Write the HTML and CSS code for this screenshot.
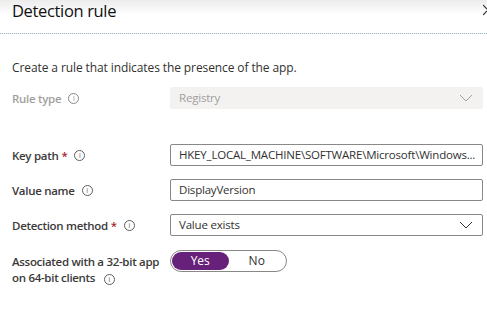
FILE: index.html
```html
<!DOCTYPE html>
<html lang="en">
<head>
  <meta charset="UTF-8" />
  <title>Detection rule</title>
  <link rel="stylesheet" href="styles.css">
</head>
<body>

<div class="panel">
  <div class="panel-header">
    <h2>Detection rule</h2>
    <svg class="close" width="4" height="14" viewBox="0 0 4 14"><path d="M0 2l4 4M0 12l4-4" stroke="#333" stroke-width="1.2"/></svg>
  </div>

  <div class="panel-body">
    <p class="intro">Create a rule that indicates the presence of the app.</p>

    <div class="row disabled">
      <label>Rule type <span class="info">i</span></label>
      <div class="select">
        <span>Registry</span>
        <svg class="chev" width="14" height="8" viewBox="0 0 14 8"><path d="M1 1l6 6 6-6" fill="none" stroke="currentColor" stroke-width="1"/></svg>
      </div>
    </div>

    <div class="row first">
      <label>Key path <span class="req">*</span> <span class="info">i</span></label>
      <div class="input">HKEY_LOCAL_MACHINE\SOFTWARE\Microsoft\Windows...</div>
    </div>

    <div class="row">
      <label>Value name <span class="info">i</span></label>
      <div class="input">DisplayVersion</div>
    </div>

    <div class="row">
      <label>Detection method <span class="req">*</span> <span class="info">i</span></label>
      <div class="select">
        <span>Value exists</span>
        <svg class="chev" width="14" height="8" viewBox="0 0 14 8"><path d="M1 1l6 6 6-6" fill="none" stroke="currentColor" stroke-width="1"/></svg>
      </div>
    </div>

    <div class="row toggle-row">
      <label>Associated with a 32-bit app<br>on 64-bit clients <span class="info">i</span></label>
      <div class="toggle">
        <span class="opt on">Yes</span>
        <span class="opt">No</span>
      </div>
    </div>
  </div>
</div>

</body>
</html>
```

FILE: styles.css
```css
* {
  margin: 0;
  padding: 0;
  box-sizing: border-box;
  font-family: "Open Sans", "Noto Sans", sans-serif;
}

body {
  background: #fff;
  width: 487px;
  height: 313px;
  overflow: hidden;
  color: #323130;
}

.panel-header {
  height: 34px;
  display: flex;
  justify-content: space-between;
  align-items: flex-start;
  padding: 1px 0 0 12px;
  background: linear-gradient(#ececec, #fff 45%);
  border-bottom: 1px dotted #9fb6c6;
}

.panel-header h2 {
  font-size: 16.5px;
  font-weight: 400;
  color: #111;
  line-height: 19px;
  letter-spacing: -0.35px;
}

.close {
  margin-top: 2px;
}

.panel-body {
  padding: 27px 4px 0 12px;
}

.intro {
  font-size: 12px;
  line-height: 14px;
  color: #323130;
  letter-spacing: -0.1px;
}

.row {
  display: flex;
  align-items: center;
  margin-top: 13px;
}

.row label {
  width: 158px;
  flex-shrink: 0;
  font-size: 11.5px;
  font-weight: 600;
  letter-spacing: -0.3px;
  color: #3b3a39;
  display: flex;
  align-items: center;
  white-space: nowrap;
}

.row.disabled {
  margin-top: 12px;
}

.row.disabled label {
  color: #a19f9d;
}

.row.first {
  margin-top: 35px;
}

.req {
  color: #a4262c;
  margin-left: 3px;
}

.info {
  display: inline-flex;
  justify-content: center;
  align-items: center;
  width: 11px;
  height: 11px;
  border: 1px solid #605e5c;
  border-radius: 50%;
  font-size: 7px;
  font-weight: 400;
  letter-spacing: 0;
  line-height: 1;
  color: #605e5c;
  margin-left: 7px;
}

.disabled .info {
  border-color: #8a8886;
  color: #8a8886;
}

.input,
.select {
  width: 313px;
  height: 22px;
  border: 1px solid #8a8886;
  border-radius: 2px;
  padding: 0 8px;
  font-size: 11.5px;
  letter-spacing: -0.2px;
  line-height: 20px;
  color: #323130;
  white-space: nowrap;
  overflow: hidden;
}

.select {
  display: flex;
  justify-content: space-between;
  align-items: center;
}

.chev {
  color: #323130;
  margin-right: 1px;
}

.disabled .select {
  background: #f3f2f1;
  border-color: #f3f2f1;
  color: #a19f9d;
}

.disabled .chev {
  color: #a19f9d;
}

.toggle-row {
  align-items: flex-start;
  margin-top: 14px;
}

.toggle-row label {
  display: block;
  line-height: 16px;
  margin-top: 4px;
}

.toggle-row .info {
  vertical-align: 0;
  margin-left: 6px;
}

.toggle {
  display: flex;
  width: 117px;
  height: 22px;
  border: 1px solid #8a8886;
  border-radius: 11px;
  padding: 1px;
}

.opt {
  flex: 1;
  text-align: center;
  font-size: 12px;
  line-height: 18px;
  color: #323130;
}

.opt.on {
  background: #68217a;
  color: #fff;
  border-radius: 9px;
}
```
